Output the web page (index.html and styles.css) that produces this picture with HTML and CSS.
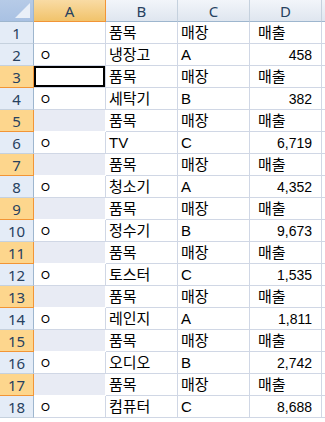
FILE: index.html
```html
<!DOCTYPE html>
<html lang="ko">
<head>
    <meta charset="UTF-8">
    <title>Sheet1</title>
    <link rel="stylesheet" href="styles.css">
</head>
<body>
    <div class="sheet" id="sheet">
        <div class="corner"><span class="tri"></span></div>
        <div class="colhead active">A</div>
        <div class="colhead">B</div>
        <div class="colhead">C</div>
        <div class="colhead">D</div>
        <div class="colhead rest"></div>
    </div>
    <script>
        const items = [
            ["냉장고", "A", "458"],
            ["세탁기", "B", "382"],
            ["TV", "C", "6,719"],
            ["청소기", "A", "4,352"],
            ["정수기", "B", "9,673"],
            ["토스터", "C", "1,535"],
            ["레인지", "A", "1,811"],
            ["오디오", "B", "2,742"],
            ["컴퓨터", "C", "8,688"]
        ];

        const sheet = document.getElementById("sheet");

        function addRow(num, cells, picked) {
            const head = document.createElement("div");
            head.className = "rowhead" + (picked ? " active" : "");
            head.textContent = num;
            sheet.appendChild(head);
            cells.forEach(c => {
                const cell = document.createElement("div");
                cell.className = "cell" + (c.cls ? " " + c.cls : "");
                cell.textContent = c.text || "";
                sheet.appendChild(cell);
            });
        }

        items.forEach((item, i) => {
            const odd = i * 2 + 1;
            let aClass = "";
            if (odd === 3) aClass = "current";
            else if (odd > 3) aClass = "picked";
            addRow(odd, [
                { cls: aClass },
                { text: "품목" },
                { text: "매장" },
                { text: "매출", cls: "indent" },
                { cls: "rest" }
            ], odd >= 3);
            addRow(odd + 1, [
                { text: "ㅇ", cls: "mark" },
                { text: item[0] },
                { text: item[1] },
                { text: item[2], cls: "num" },
                { cls: "rest" }
            ], false);
        });
    </script>
</body>
</html>
```

FILE: styles.css
```css
body {
    margin: 0;
    background: #ffffff;
    font-family: "Liberation Sans", "Noto Sans CJK KR", sans-serif;
    font-size: 15px;
    color: #000000;
}
.sheet {
    display: grid;
    grid-template-columns: 34px 72px 72px 72px 72px 1fr;
    grid-auto-rows: 22px;
    width: 325px;
}
.corner {
    position: relative;
    background: linear-gradient(#b6cbe7, #a9c1e3);
    border-right: 1px solid #9eb6ce;
    border-bottom: 1px solid #9eb6ce;
    box-sizing: border-box;
}
.tri {
    position: absolute;
    right: 3px;
    bottom: 3px;
    width: 0;
    height: 0;
    border-left: 15px solid transparent;
    border-bottom: 15px solid #e9eff8;
}
.colhead {
    background: linear-gradient(#f2f5fa, #dfe6ef);
    border-right: 1px solid #c5d1de;
    border-bottom: 1px solid #9eb6ce;
    box-sizing: border-box;
    display: flex;
    align-items: center;
    justify-content: center;
    font-family: "Noto Sans", "Liberation Sans", sans-serif;
    font-size: 15px;
    color: #27415f;
}
.colhead.active {
    background: linear-gradient(#f9dba4, #f1c36b);
    border-right: 1px solid #f29536;
    border-bottom: 1px solid #f29536;
}
.colhead.rest {
    border-right: none;
}
.rowhead {
    background: #e4ecf7;
    border-right: 1px solid #9eb6ce;
    border-bottom: 1px solid #c5d1de;
    box-sizing: border-box;
    display: flex;
    align-items: center;
    justify-content: center;
    font-family: "Noto Sans", "Liberation Sans", sans-serif;
    font-size: 15px;
    color: #27415f;
}
.rowhead.active {
    background: #fdd68d;
    border-right: 1px solid #f29536;
    border-bottom: 1px solid #f29536;
}
.cell {
    border-right: 1px solid #d0d7e5;
    border-bottom: 1px solid #d0d7e5;
    box-sizing: border-box;
    display: flex;
    align-items: center;
    padding: 0 3px;
    line-height: 1;
    white-space: nowrap;
    overflow: hidden;
}
.cell.rest {
    border-right: none;
}
.cell.num {
    justify-content: flex-end;
    padding-right: 9px;
    font-size: 14px;
}
.cell.indent {
    padding-left: 8px;
}
.cell.mark {
    padding-left: 5px;
    font-size: 14px;
}
.cell.picked {
    background: #e8ebf4;
    border-right-color: #ffffff;
    border-bottom-color: #ffffff;
}
.cell.current {
    box-shadow: inset 0 0 0 2px #000000;
}
```
